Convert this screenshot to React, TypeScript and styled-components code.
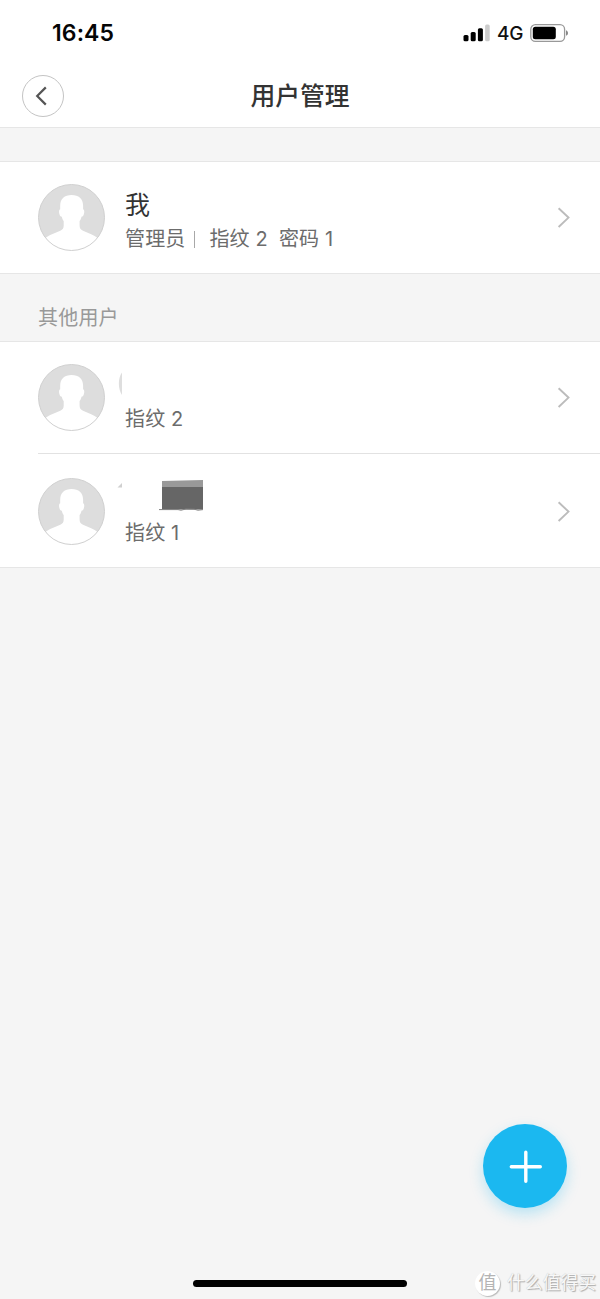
import React from "react";
import styled, { createGlobalStyle } from "styled-components";

const GlobalStyle = createGlobalStyle`
  * { box-sizing: border-box; }
  body {
    margin: 0;
    background: #f5f5f5;
    font-family: Inter, "Noto Sans CJK SC", sans-serif;
  }
`;

const Screen = styled.div`
  position: relative;
  display: flex;
  flex-direction: column;
  width: 600px;
  height: 1299px;
  overflow: hidden;
  background: #f5f5f5;
`;

const StatusBar = styled.div`
  display: flex;
  align-items: center;
  justify-content: space-between;
  height: 66px;
  padding: 0 31px 0 52px;
  background: #fff;
`;

const Clock = styled.span`
  font-size: 23px;
  font-weight: 600;
  line-height: 28px;
  letter-spacing: 0.1px;
  color: #050505;
`;

const StatusIcons = styled.div`
  display: flex;
  align-items: center;
`;

const Network = styled.span`
  margin: 1px 7px 0 7px;
  width: 26px;
  font-size: 19px;
  font-weight: 500;
  line-height: 24px;
  letter-spacing: -0.3px;
  white-space: nowrap;
  color: #111;
`;

const NavBar = styled.header`
  display: grid;
  grid-template-columns: 42px 1fr 42px;
  align-items: center;
  height: 62px;
  padding: 0 22px 1px;
  background: #fff;
  border-bottom: 1px solid #e6e6e6;
`;

const BackButton = styled.button`
  display: flex;
  align-items: center;
  justify-content: center;
  width: 42px;
  height: 42px;
  padding: 0 2px 0 0;
  background: #fff;
  border: 1px solid #c4c4c4;
  border-radius: 50%;
`;

const Title = styled.h1`
  margin: 0;
  text-align: center;
  font-size: 24.8px;
  font-weight: 500;
  line-height: 36px;
  color: #333;
`;

const SectionGap = styled.div<{ $height: number }>`
  display: flex;
  align-items: flex-end;
  height: ${(p) => p.$height}px;
  padding: 0 38px 8px;
  font-size: 20px;
  line-height: 30px;
  letter-spacing: 0.2px;
  color: #999;
`;

const List = styled.div`
  display: flex;
  flex-direction: column;
  background: #fff;
  border-top: 1px solid #e6e6e6;
  border-bottom: 1px solid #e6e6e6;
`;

const Divider = styled.div`
  height: 1px;
  margin-left: 38px;
  background: #e2e2e2;
`;

const UserRow = styled.div<{ $height: number }>`
  display: flex;
  align-items: center;
  height: ${(p) => p.$height}px;
  padding: ${(p) => (p.$height > 111 ? 3 : 0)}px 29px 0 38px;
`;

const UserText = styled.div`
  display: flex;
  flex: 1;
  flex-direction: column;
  padding: 6px 0 0 19px;
`;

const NameLine = styled.div`
  position: relative;
  height: 36px;
  font-size: 25px;
  line-height: 36px;
  color: #333;
`;

const Details = styled.div`
  display: flex;
  align-items: center;
  height: 32px;
  font-size: 20px;
  line-height: 32px;
  letter-spacing: 0.15px;
  color: #6c6c6c;
`;

const Separator = styled.span`
  width: 1px;
  height: 17px;
  margin: 1px 14px 0 9px;
  background: #a8a8a8;
`;

const Detail = styled.span`
  margin-right: 11px;
  white-space: pre;
`;

const Redaction = styled.svg`
  position: absolute;
  top: 0;
  left: -8px;
  overflow: visible;
`;

const AddButton = styled.button`
  position: absolute;
  right: 33px;
  bottom: 91px;
  display: flex;
  align-items: center;
  justify-content: center;
  width: 84px;
  height: 84px;
  padding: 0;
  border: 0;
  border-radius: 50%;
  background: #1bb8f0;
  box-shadow: 0 6px 14px rgba(27, 184, 240, 0.28);
`;

const HomeIndicator = styled.div`
  position: absolute;
  left: 193px;
  bottom: 12px;
  width: 214px;
  height: 7px;
  border-radius: 4px;
  background: #000;
`;

const Watermark = styled.div`
  position: absolute;
  right: 4px;
  bottom: 3px;
  display: flex;
  align-items: center;
  gap: 7px;
  font-size: 17.8px;
  line-height: 26px;
  color: #f8f8f8;
  text-shadow: 1px 1px 1px #aaa, 0 0 1px #bbb;
`;

const WatermarkSeal = styled.span`
  width: 25px;
  height: 25px;
  border-radius: 50%;
  background: #fff;
  box-shadow: 1px 1px 1px #bbb;
  text-align: center;
  font-size: 18px;
  line-height: 23px;
  color: #b4b4b4;
  text-shadow: none;
`;

const SignalIcon = () => (
  <svg width="27" height="18" viewBox="0 0 27 18">
    <rect x="0.5" y="11" width="5" height="6.2" rx="1.5" fill="#000" />
    <rect x="7.7" y="8" width="5" height="9.2" rx="1.5" fill="#000" />
    <rect x="14.9" y="4.2" width="5" height="13" rx="1.5" fill="#000" />
    <rect x="22.1" y="0.4" width="4.6" height="16.8" rx="1.5" fill="#ccc" />
  </svg>
);

const BatteryIcon = () => (
  <svg width="39" height="18" viewBox="0 0 39 18">
    <rect x="0.8" y="0.7" width="33.8" height="16.6" rx="4.6" fill="none" stroke="#999" strokeWidth="1.3" />
    <rect x="2.8" y="2.8" width="23" height="12.4" rx="2.5" fill="#000" />
    <path d="M36 6.2v5.6c2.7-1 2.7-4.6 0-5.6z" fill="#888" />
  </svg>
);

const BackIcon = () => (
  <svg width="20" height="24" viewBox="0 0 20 24">
    <path d="M13.800 3.400 5.200 12l8.600 8.600" fill="none" stroke="#555" strokeWidth="2.2" />
  </svg>
);

const Avatar = () => (
  <svg width="68" height="68" viewBox="0 0 68 68">
    <circle cx="33.5" cy="33.5" r="33" fill="#ddd" />
    <path
      d="M33.600 11C26.500 11 22.200 15 22.200 21.500V25.300C20.900 25.800 20.800 28 21.400 30C21.900 31.800 22.500 32.600 23.800 32.700C24.200 34.600 24.800 36 25.700 37V41.500C25.700 44.300 24.800 45.500 22.300 46.800L14 50.300C11.500 51.400 9.200 52.800 7.400 54A33 33 0 0 0 59.600 54C57.800 52.800 55.700 51.400 53.200 50.300L45 46.800C42.500 45.500 41.600 44.300 41.600 41.500V37C42.500 36 43.100 34.600 43.500 32.700C44.800 32.600 45.400 31.800 45.900 30C46.500 28 46.400 25.800 45.100 25.300V21.500C45.100 15 40.700 11 33.600 11Z"
      fill="#fff"
    />
    <circle cx="33.5" cy="33.5" r="33" fill="none" stroke="#d0d0d0" strokeWidth="1" />
  </svg>
);

const Chevron = () => (
  <svg width="14" height="22" viewBox="0 0 14 22">
    <path d="M1.600 1.200 11.500 10.600 1.600 20" fill="none" stroke="#bcbcbc" strokeWidth="1.900" />
  </svg>
);

const PlusIcon = () => (
  <svg width="34" height="34" viewBox="0 0 34 34">
    <path d="M17.800 3.300v29M3.300 17.800h29" stroke="#fff" strokeWidth="3.400" strokeLinecap="round" />
  </svg>
);

const FirstRedaction = () => (
  <Redaction width="100" height="36" viewBox="0 0 100 36">
    <path d="M5 5.500C.8 11 .8 22 5 28z" fill="#dedede" />
  </Redaction>
);

const SecondRedaction = () => (
  <Redaction width="100" height="36" viewBox="0 0 100 36">
    <path d="M.5 6.500 5 2v4.500z" fill="#d0d0d0" />
    <path d="M45 6H86V28.500H45z" fill="#666" />
    <path d="M45 0 86 -1V6H45z" fill="#999" />
    <path d="M42 28.600h19l3 .600 5-1.200 8 .2 4 1 5-.6" fill="none" stroke="#808080" strokeWidth="1" />
  </Redaction>
);

type UserProps = {
  height: number;
  name: React.ReactNode;
  role?: string;
  details: string[];
};

const User = ({ height, name, role, details }: UserProps) => (
  <UserRow $height={height}>
    <Avatar />
    <UserText>
      <NameLine>{name}</NameLine>
      <Details>
        {role && (
          <>
            <span>{role}</span>
            <Separator />
          </>
        )}
        {details.map((d) => (
          <Detail key={d}>{d}</Detail>
        ))}
      </Details>
    </UserText>
    <Chevron />
  </UserRow>
);

export default function App() {
  return (
    <Screen>
      <GlobalStyle />
      <StatusBar>
        <Clock>16:45</Clock>
        <StatusIcons>
          <SignalIcon />
          <Network>4G</Network>
          <BatteryIcon />
        </StatusIcons>
      </StatusBar>
      <NavBar>
        <BackButton aria-label="返回">
          <BackIcon />
        </BackButton>
        <Title>用户管理</Title>
      </NavBar>
      <SectionGap $height={33} />
      <List>
        <User height={111} name="我" role="管理员" details={["指纹 2", "密码 1"]} />
      </List>
      <SectionGap $height={67}>其他用户</SectionGap>
      <List>
        <User height={111} name={<FirstRedaction />} details={["指纹 2"]} />
        <Divider />
        <User height={113} name={<SecondRedaction />} details={["指纹 1"]} />
      </List>
      <AddButton aria-label="添加">
        <PlusIcon />
      </AddButton>
      <HomeIndicator />
      <Watermark>
        <WatermarkSeal>值</WatermarkSeal>
        <span>什么值得买</span>
      </Watermark>
    </Screen>
  );
}
